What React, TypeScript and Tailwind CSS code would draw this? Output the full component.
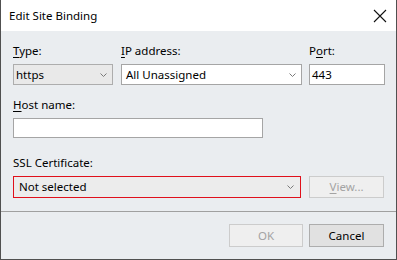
import React from "react";

function Chevron() {
  return (
    <svg width="7" height="4" viewBox="0 0 7 4" className="shrink-0">
      <path d="M0.5 0.5 L3.5 3.5 L6.5 0.5" fill="none" stroke="#7a7a7a" strokeWidth="1" />
    </svg>
  );
}

function Label({ pre, u, post }: { pre?: string; u: string; post: string }) {
  return (
    <div className="h-4 leading-4 text-black">
      {pre}
      <span className="underline underline-offset-2">{u}</span>
      {post}
    </div>
  );
}

export default function App() {
  return (
    <div
      className="w-[397px] h-[260px] flex flex-col border-x border-b border-[#505050] bg-[#eaedf0] text-[11.5px]"
      style={{ fontFamily: '"Noto Sans", "Segoe UI", sans-serif' }}
    >
      {/* title bar */}
      <div className="h-[31px] shrink-0 bg-white flex items-center justify-between pl-2 pr-[9px]">
        <span className="text-black text-[11.5px] leading-4 pt-[1px]">Edit Site Binding</span>
        <svg width="14" height="14" viewBox="0 0 14 14">
          <path d="M1 1 L13 13 M13 1 L1 13" stroke="#111" strokeWidth="1.1" />
        </svg>
      </div>

      {/* body */}
      <div className="flex-1 flex flex-col px-3 pt-3">
        <div className="grid grid-cols-[100px_181px_75px] gap-x-2">
          <div>
            <Label u="T" post="ype:" />
            <div className="mt-[5px] h-[21px] border border-[#adadad] bg-[#e9e9e9] flex items-center justify-between pl-[2px] pr-[5px]">
              <span>https</span>
              <Chevron />
            </div>
          </div>
          <div>
            <Label u="I" post="P address:" />
            <div className="mt-[5px] h-[21px] border border-[#a5a5a5] bg-white flex items-center justify-between pl-[4px] pr-[5px]">
              <span>All Unassigned</span>
              <Chevron />
            </div>
          </div>
          <div className="-ml-px">
            <Label pre="P" u="o" post="rt:" />
            <div className="mt-[5px] h-[21px] border border-[#a5a5a5] bg-white flex items-center pl-[2px]">
              <span>443</span>
            </div>
          </div>
        </div>

        <div className="mt-3">
          <Label u="H" post="ost name:" />
          <div className="mt-[5px] w-[250px] h-[20px] border border-[#a5a5a5] bg-white" />
        </div>

        <div className="mt-[17px]">
          <Label pre="SSL Certif" u="i" post="cate:" />
          <div className="mt-[5px] flex gap-2">
            <div className="w-[289px] h-[22px] border border-[#e0101b] bg-[#ececec] flex items-center justify-between pl-[5px] pr-[6px]">
              <span>Not selected</span>
              <Chevron />
            </div>
            <div className="w-[75px] h-[22px] border border-[#cccccc] bg-[#efefef] flex items-center justify-center text-[#a3a3a3]">
              <span>
                <span className="underline underline-offset-2">V</span>iew...
              </span>
            </div>
          </div>
        </div>
      </div>

      {/* footer */}
      <div className="h-[48px] shrink-0 border-t border-[#a0a0a0] flex justify-end items-start gap-[6px] pt-3 pr-3">
        <div className="w-[74px] h-[23px] border border-[#cccccc] bg-[#efefef] flex items-center justify-center text-[#a3a3a3]">
          OK
        </div>
        <div className="w-[75px] h-[23px] border border-[#adadad] bg-[#e1e1e1] flex items-center justify-center text-black">
          Cancel
        </div>
      </div>
    </div>
  );
}
